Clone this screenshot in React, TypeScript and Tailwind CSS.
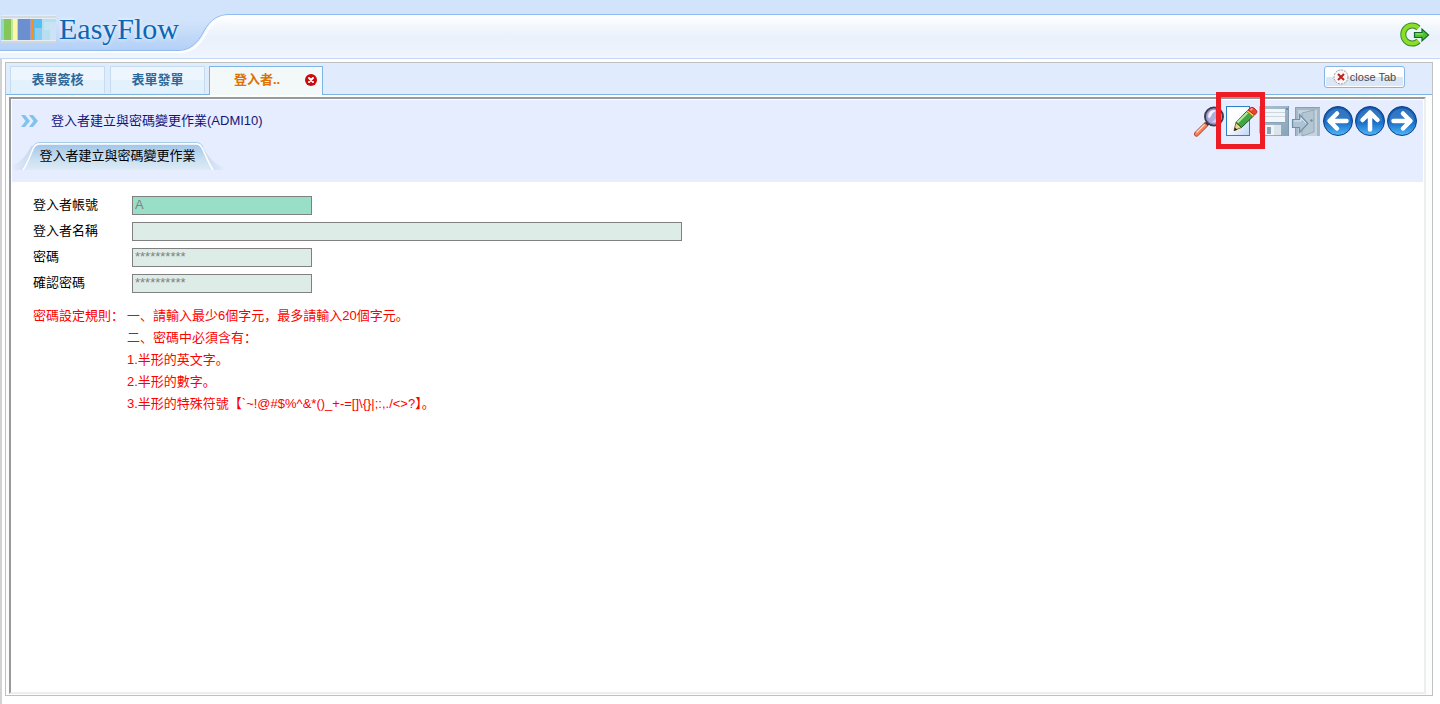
import React from 'react';

const Logo = () => (
  <div className="grid w-[240px] shrink-0">
    <svg className="col-start-1 row-start-1" width="240" height="58" viewBox="0 0 240 58" aria-hidden="true">
      <defs>
        <linearGradient id="headTop" x1="0" y1="0" x2="0" y2="50" gradientUnits="userSpaceOnUse">
          <stop offset="0" stopColor="#d2e4fb" />
          <stop offset="0.4" stopColor="#d2e4fb" />
          <stop offset="1" stopColor="#b3d0f7" />
        </linearGradient>
        <linearGradient id="headBase" x1="0" y1="15" x2="0" y2="58" gradientUnits="userSpaceOnUse">
          <stop offset="0" stopColor="#ffffff" />
          <stop offset="0.5" stopColor="#e9f1fc" />
          <stop offset="1" stopColor="#f0f5fe" />
        </linearGradient>
      </defs>
      <rect width="240" height="58" fill="url(#headBase)" />
      <path d="M0 0H240V14H229C218 14 210 20 204 31C198 43 190 50 178 50H0Z" fill="url(#headTop)" />
      <path d="M0 52H180C192 52 200 45 206 33C212 22 219 16 230 16" fill="none" stroke="#fff" strokeWidth="2" />
      <path d="M0 50.500H178C190 50.500 198 43 204 31C210 20 218 14.500 229 14.500H240" fill="none" stroke="#8fbaf2" strokeWidth="1" />
      <g>
        <rect x="1" y="15" width="55" height="28" fill="#e4eefa" />
        <rect x="1" y="16" width="55" height="2" fill="#d5dbdc" />
        <rect x="1" y="41" width="55" height="2" fill="#d2d8d9" />
        <rect x="1" y="19" width="3" height="21" fill="#8fdcc4" />
        <rect x="4" y="19" width="7" height="21" fill="#84c65a" />
        <rect x="11" y="19" width="2" height="21" fill="#c4e39c" />
        <rect x="13" y="19" width="4" height="21" fill="#fdf8a6" />
        <rect x="17" y="19" width="14" height="21" fill="#6c8fd0" />
        <rect x="17" y="19" width="1" height="21" fill="#b8d5e8" />
        <rect x="30" y="19" width="2" height="21" fill="#9a9fd0" />
        <rect x="32" y="19" width="2" height="21" fill="#f58f20" />
        <rect x="34" y="19" width="8" height="21" fill="#58bdf0" />
        <rect x="35" y="28" width="7" height="12" fill="#88cdf2" />
        <rect x="42" y="19" width="14" height="21" fill="#b8dff0" />
        <rect x="44" y="22" width="12" height="8" fill="#c6e5f3" />
        <rect x="50" y="24" width="6" height="16" fill="#cce2f5" />
      </g>
    </svg>
    <h1 className="col-start-1 row-start-1 pt-[11px] pl-[59px] font-['Liberation_Serif',serif] text-[30px] leading-[36px] text-[#0d66b5] [text-shadow:0_0_4px_#fff]">
      EasyFlow
    </h1>
  </div>
);

const LogoutIcon = () => (
  <svg width="32" height="28" viewBox="0 0 32 28" aria-hidden="true">
    <path d="M20.500 7A9 9 0 1 0 20.500 20" fill="none" stroke="#2c8f2c" strokeWidth="6" />
    <path d="M20.500 7A9 9 0 1 0 20.500 20" fill="none" stroke="#8edb28" strokeWidth="4" />
    <path d="M16.500 11.500H24V8L30.500 14L24 20V16.500H16.500Z" fill="#4fc22c" stroke="#0f6a2a" strokeWidth="1.200" />
    <path d="M17.500 13H25" stroke="#a6ea60" strokeWidth="1" />
  </svg>
);

const SearchIcon = () => (
  <svg width="32" height="32" viewBox="0 0 32 32" aria-hidden="true">
    <path d="M2.500 29L12 19.500" stroke="#a8402a" strokeWidth="5" strokeLinecap="round" />
    <path d="M2.500 29L11.500 20" stroke="#f98058" strokeWidth="3.500" strokeLinecap="round" />
    <path d="M2.500 27.500L10.500 19.500" stroke="#ffd9c2" strokeWidth="1.300" />
    <path d="M12.500 19.500L14.500 17.500" stroke="#33313f" strokeWidth="3.500" />
    <circle cx="20" cy="11.500" r="9" fill="#aeaddc" stroke="#3f3b4c" strokeWidth="2" />
    <circle cx="20" cy="11.500" r="7.500" fill="none" stroke="#8f8dc0" strokeWidth="1" />
    <path d="M14.500 13C13.500 8 16.500 5 21 5C23 6 19 7 18 9C17 11 16.500 13 14.500 13Z" fill="#f2f1ff" />
    <path d="M18 17.500C22 18 25 16 26 13C24 13 20 14 18 17.500Z" fill="#cdccf2" />
  </svg>
);

const EditIcon = () => (
  <svg width="32" height="32" viewBox="0 0 32 32" aria-hidden="true">
    <defs>
      <linearGradient id="sheet" x1="0" y1="0" x2="1" y2="1">
        <stop offset="0.4" stopColor="#fff" />
        <stop offset="1" stopColor="#bdd6f7" />
      </linearGradient>
    </defs>
    <rect x="0.500" y="1.500" width="23" height="29" fill="url(#sheet)" stroke="#2b82c9" />
    <path d="M8 25.500L10 17.500L15.500 22.500Z" fill="#f3d68c" stroke="#6b4b14" strokeWidth="0.800" />
    <path d="M8 26L8.800 22.500L11.500 24.800Z" fill="#222" />
    <path d="M10 17.500L21 6L27.500 11L15.500 22.500Z" fill="#43a544" stroke="#175a1c" strokeWidth="1" />
    <path d="M11.500 17.500L21.500 7.500" stroke="#b4ea9c" strokeWidth="2" />
    <path d="M20.500 6.500L22.500 4.500L28.800 9.500L26.800 11.500Z" fill="#e8cf58" stroke="#8d6a18" strokeWidth="0.800" />
    <path d="M22 5L24 3C25 2.200 27 2.200 28 3L30.500 5.500C31.200 6.500 31 7.500 30.500 8L28.500 10Z" fill="#ef4030" stroke="#9c1d18" strokeWidth="0.800" />
    <path d="M24.500 5L26.500 3.700" stroke="#ffb3a2" strokeWidth="1.500" />
  </svg>
);

const SaveIcon = () => (
  <svg width="32" height="32" viewBox="0 0 32 32" aria-hidden="true">
    <defs>
      <linearGradient id="disk" x1="0" y1="0" x2="1" y2="1">
        <stop offset="0" stopColor="#aec3d3" />
        <stop offset="1" stopColor="#87a3b9" />
      </linearGradient>
    </defs>
    <path d="M1 1H31V31H4L1 28Z" fill="url(#disk)" />
    <rect x="6" y="4" width="21" height="13" fill="#f3f6f9" />
    <path d="M6 7.500H27M6 11.500H27" stroke="#cbd6df" />
    <path d="M6 17.500H27" stroke="#87a3b9" />
    <rect x="28" y="3" width="2" height="2" fill="#6f8ea6" />
    <rect x="7" y="20" width="16" height="10" fill="#f1f4f7" />
    <rect x="9" y="22" width="4" height="7" fill="#8aa5ba" />
    <rect x="16" y="20" width="7" height="10" fill="#dbe4eb" />
    <path d="M30.500 1V31" stroke="#8099ae" />
  </svg>
);

const ExitIcon = () => (
  <svg width="32" height="32" viewBox="0 0 32 32" aria-hidden="true">
    <path d="M5 2H30V31H5Z" fill="#a3b9c9" />
    <path d="M5.500 31V2.500H30" fill="none" stroke="#86a1b5" />
    <path d="M8 31V5H27V31Z" fill="#c6d3dd" />
    <path d="M12 31V8L24 5V27L12 31Z" fill="#b5c6d3" stroke="#86a1b5" strokeWidth="0.800" />
    <circle cx="21.500" cy="15.500" r="1.200" fill="#6f8ea6" />
    <path d="M2.500 14.500H9.500V9.500L18 18.500L9.500 27.500V22.500H2.500Z" fill="#adc3d3" stroke="#6f90aa" strokeWidth="1.200" />
    <path d="M4 16H11V13L16 18" fill="none" stroke="#dfe9f0" />
  </svg>
);

const arrowTurn = { left: 0, up: 90, right: 180 };

const ArrowIcon = ({ dir }: { dir: keyof typeof arrowTurn }) => (
  <svg width="32" height="32" viewBox="0 0 32 32" aria-hidden="true">
    <defs>
      <linearGradient id={`ball-${dir}`} x1="0" y1="0" x2="0" y2="1">
        <stop offset="0" stopColor="#0b56ad" />
        <stop offset="0.5" stopColor="#1467c2" />
        <stop offset="1" stopColor="#4fb8fa" />
      </linearGradient>
    </defs>
    <circle cx="16" cy="16" r="14.500" fill={`url(#ball-${dir})`} stroke="#123f86" strokeWidth="1" />
    <path d="M4 17C3 9 9 3.500 16 3.500C23 3.500 29 9 28 17C22 13 10 13 4 17Z" fill="#fff" opacity="0.150" />
    <path
      d="M15 8.500L7.500 16L15 23.500M8.500 16H24.500"
      transform={`rotate(${arrowTurn[dir]} 16 16)`}
      fill="none"
      stroke="#fff"
      strokeWidth="4.500"
      strokeLinecap="round"
      strokeLinejoin="round"
    />
  </svg>
);

const ToolButton = ({ label, children }: { label: string; children: React.ReactNode }) => (
  <button type="button" aria-label={label} className="block size-8">
    {children}
  </button>
);

const Tab = ({ label }: { label: string }) => (
  <button
    type="button"
    className="h-[27px] w-[95px] border border-b-0 border-[#c3dcf0] bg-linear-to-b from-[#edf6fe] from-50% to-[#e2f1fb] to-50% text-[13px] leading-[26px] font-bold text-[#2b689c]"
  >
    {label}
  </button>
);

const fields = [
  { id: 'account', label: '登入者帳號', value: 'A', style: 'w-[180px] bg-[#99dfc8]' },
  { id: 'name', label: '登入者名稱', value: '', style: 'w-[550px] bg-[#deece8]' },
  { id: 'password', label: '密碼', value: '**********', style: 'w-[180px] bg-[#deece8]' },
  { id: 'confirm', label: '確認密碼', value: '**********', style: 'w-[180px] bg-[#deece8]' },
];

const rules = [
  '一、請輸入最少6個字元，最多請輸入20個字元。',
  '二、密碼中必須含有：',
  '1.半形的英文字。',
  '2.半形的數字。',
  '3.半形的特殊符號【`~!@#$%^&*()_+-=[]\\{}|;:,./<>?】。',
];

export default function App() {
  return (
    <div className="flex min-h-screen flex-col bg-white font-['Liberation_Sans','Noto_Sans_CJK_SC',sans-serif] text-[13px] text-black">
      <header className="flex h-[59px] border-b border-[#c3d8f6]">
        <Logo />
        <div className="flex flex-1 flex-col">
          <div className="h-[14px] bg-[#d2e4fb]" />
          <div className="flex flex-1 items-center justify-end border-t border-[#8fbaf2] bg-linear-to-b from-white via-[#e9f1fc] via-50% to-[#f0f5fe] pr-[10px] pb-1">
            <button type="button" aria-label="登出">
              <LogoutIcon />
            </button>
          </div>
        </div>
      </header>

      <div className="flex flex-1 flex-col border-l-2 border-[#d2d2d2] pt-[3px] pr-[7px] pb-2 pl-[3px]">
        <div className="flex flex-1 flex-col border border-[#c0c0c0] bg-[#fcfefe]">
          {/* Tab bar */}
          <nav className="flex h-8 justify-between border-b border-[#7fb5e2] bg-[#e0ebfe] pt-[3px] pr-[27px] pl-1">
            <div className="flex">
              <div className="flex gap-[5px]">
                <Tab label="表單簽核" />
                <Tab label="表單發單" />
              </div>
              <div className="ml-1 flex h-[29px] w-[114px] items-center justify-between border border-b-0 border-[#7fb5e2] bg-[#f3f8f9] pr-[5px] pb-[3px] pl-6">
                <button type="button" className="text-[13px] leading-5 font-bold text-[#e07000]">
                  登入者..
                </button>
                <button type="button" aria-label="關閉">
                  <svg width="12" height="12" viewBox="0 0 12 12" aria-hidden="true">
                    <circle cx="6" cy="6" r="6" fill="#cb0a0e" />
                    <path d="M4 4L8 8M8 4L4 8" stroke="#fff" strokeWidth="2" strokeLinecap="round" />
                  </svg>
                </button>
              </div>
            </div>
            <button
              type="button"
              className="flex h-[22px] w-[81px] items-center justify-center gap-[1px] rounded-[3px] border border-[#86b5ea] bg-linear-to-b from-white from-50% to-[#dbe6f6] to-50% text-[11px] text-[#454850] inset-ring inset-ring-white"
            >
              <svg width="16" height="16" viewBox="0 0 16 16" aria-hidden="true">
                <circle cx="8" cy="8" r="7" fill="#f7f7f7" stroke="#9a9a9a" strokeDasharray="2 1" />
                <path d="M5 5L11 11M11 5L5 11" stroke="#c32020" strokeWidth="2" />
              </svg>
              close Tab
            </button>
          </nav>

          <main className="mt-[2px] mr-[6px] mb-[1px] ml-[3px] flex-1 border-2 border-t-[#999] border-r-[#eee] border-b-[#eee] border-l-[#999] bg-white p-[1px]">
            <div className="flex h-[82px] justify-between bg-[#e6edfe] pt-[5px] pr-[5px]">
              <div>
                <div className="flex h-8 items-center pl-[9px]">
                  <svg className="mr-[13px]" width="17" height="12" viewBox="0 0 17 12" aria-hidden="true">
                    <path d="M0 0H4L9 6L4 12H0L4.500 6Z M8 0H12L17 6L12 12H8L12.500 6Z" fill="#82c3ee" />
                  </svg>
                  <h2 className="text-[13px] leading-5 text-[#14147a]">登入者建立與密碼變更作業(ADMI10)</h2>
                </div>
                <div className="mt-[5px] grid w-[211px]">
                  <svg className="col-start-1 row-start-1" width="211" height="28" viewBox="0 0 211 28" aria-hidden="true">
                    <defs>
                      <linearGradient id="tabFill" x1="0" y1="0" x2="0" y2="1">
                        <stop offset="0" stopColor="#9fc5e8" />
                        <stop offset="0.6" stopColor="#cbe0f1" />
                        <stop offset="1" stopColor="#dcebf4" />
                      </linearGradient>
                      <linearGradient id="shadeLeft">
                        <stop offset="0" stopColor="#e1eafb" />
                        <stop offset="1" stopColor="#c6d7ee" />
                      </linearGradient>
                      <linearGradient id="shadeRight">
                        <stop offset="0" stopColor="#c6d7ee" />
                        <stop offset="1" stopColor="#dfe9fa" />
                      </linearGradient>
                    </defs>
                    <path d="M1 28V23C9 20 15 12 19 4H22V28Z" fill="url(#shadeLeft)" />
                    <path d="M190 28V4C195 13 202 22 211 25V28Z" fill="url(#shadeRight)" />
                    <path d="M11 28C15 22 18 14 21 7Q23 2 28 2H184Q188 2 190 6C194 14 197 22 201 28Z" fill="url(#tabFill)" />
                    <path d="M21 5Q23 0.500 28 0.500H184Q189 0.500 191 5" fill="none" stroke="#a7cdec" />
                    <path d="M11 28C15 22 18 14 21 7Q23 2 28 2H184Q188 2 190 6C194 14 197 22 201 28" fill="none" stroke="#fff" strokeWidth="1.500" />
                  </svg>
                  <button type="button" className="col-start-1 row-start-1 text-center text-[13px] leading-[28px]">
                    登入者建立與密碼變更作業
                  </button>
                </div>
              </div>

              <div className="flex h-8">
                <ToolButton label="查詢">
                  <SearchIcon />
                </ToolButton>
                <div className="relative size-8">
                  <ToolButton label="修改">
                    <EditIcon />
                  </ToolButton>
                  <span className="pointer-events-none absolute -top-[13px] -right-[7px] -bottom-3 -left-[10px] z-10 border-5 border-[#ee1c25]" />
                </div>
                <ToolButton label="儲存">
                  <SaveIcon />
                </ToolButton>
                <ToolButton label="離開">
                  <ExitIcon />
                </ToolButton>
                <ToolButton label="上一筆">
                  <ArrowIcon dir="left" />
                </ToolButton>
                <ToolButton label="回上層">
                  <ArrowIcon dir="up" />
                </ToolButton>
                <ToolButton label="下一筆">
                  <ArrowIcon dir="right" />
                </ToolButton>
              </div>
            </div>

            <form className="pt-[10px] pl-[21px]">
              {fields.map((f) => (
                <div key={f.id} className="flex h-[26px] items-center">
                  <label htmlFor={f.id} className="w-[99px] leading-5">
                    {f.label}
                  </label>
                  <input
                    id={f.id}
                    type="text"
                    readOnly
                    value={f.value}
                    className={`h-[19px] border border-[#808080] px-[2px] text-[13px] text-[#808080] ${f.style}`}
                  />
                </div>
              ))}
            </form>

            <div className="flex pt-[9px] pl-[21px] leading-[22px] text-[#f00]">
              <p className="w-[94px]">密碼設定規則：</p>
              <div>
                {rules.map((rule) => (
                  <p key={rule}>{rule}</p>
                ))}
              </div>
            </div>
          </main>
        </div>
      </div>
    </div>
  );
}
